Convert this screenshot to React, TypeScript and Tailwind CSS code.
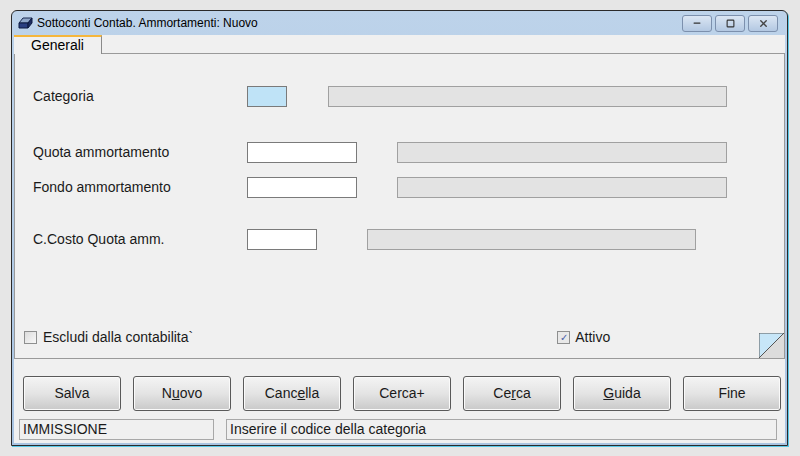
import { Minus, Square, X } from 'lucide-react';

const font = { fontFamily: '"Liberation Sans", Arial, sans-serif' };

const Row = ({ label, input, gap, bg }: { label: string; input: number; gap: number; bg?: string }) => (
  <div className="flex items-center h-[22px]">
    <div className="w-[214px] text-[14px] text-[#1a1a1a]">{label}</div>
    <div className={`h-[21px] border border-[#7a7a7a] ${bg ?? 'bg-white'}`} style={{ width: input }} />
    <div className="h-[21px] border border-[#a0a0a0] bg-[#e3e3e3]" style={{ marginLeft: gap, width: label.startsWith('C.') ? 329 : label === 'Categoria' ? 399 : 330 }} />
  </div>
);

const Btn = ({ children }: { children: React.ReactNode }) => (
  <button className="w-[98px] h-[35px] rounded-[3px] border border-[#5a5a5a] bg-gradient-to-b from-[#f4f4f4] via-[#e4e4e4] to-[#c9c9c9] text-[14px] text-[#1a1a1a] shadow-[inset_0_0_0_1px_#fafafa]">
    {children}
  </button>
);

export default function App() {
  return (
    <div style={font} className="w-[800px] h-[456px] bg-[#e6e6e6] pt-[10px] pl-[11px]">
      <div className="w-[777px] h-[436px] border border-[#2a2a2a] rounded-t-[6px] bg-gradient-to-b from-[#bdd3ea] to-[#a9c4e2] p-[2px] pt-0 flex flex-col shadow-[1px_1px_0_#58c7e6]">
        <div className="h-[24px] flex items-center px-[3px] shrink-0">
          <svg width="16" height="14" viewBox="0 0 16 14" className="mr-[4px]">
            <path d="M2 7 L6 2 L15 2 L11 7 Z" fill="#8fa7c9" stroke="#1a2a50" />
            <path d="M2 7 L11 7 L11 12 L2 12 Z" fill="#2a3f80" stroke="#0d1a40" />
            <path d="M11 7 L15 2 L15 7 L11 12 Z" fill="#1c2c60" stroke="#0d1a40" />
          </svg>
          <span className="text-[12px] text-black">Sottoconti Contab. Ammortamenti: Nuovo</span>
          <div className="ml-auto flex gap-[3px] mr-[4px]">
            <div className="w-[30px] h-[17px] rounded-[3px] border border-[#7c90ad] bg-gradient-to-b from-[#dbe6f3] to-[#b3c8e2] flex items-center justify-center"><Minus size={10} strokeWidth={3} className="text-[#333]" /></div>
            <div className="w-[30px] h-[17px] rounded-[3px] border border-[#7c90ad] bg-gradient-to-b from-[#dbe6f3] to-[#b3c8e2] flex items-center justify-center"><Square size={9} strokeWidth={3} className="text-[#333]" /></div>
            <div className="w-[30px] h-[17px] rounded-[3px] border border-[#7c90ad] bg-gradient-to-b from-[#dbe6f3] to-[#b3c8e2] flex items-center justify-center"><X size={11} strokeWidth={3} className="text-[#444]" /></div>
          </div>
        </div>
        <div className="flex-1 bg-[#f0f0f0] flex flex-col">
          <div className="h-[19px] flex items-end">
            <div className="w-[88px] h-[19px] border-t-2 border-t-[#f5b63c] border-r border-[#8a8a8a] text-[14px] pl-[17px] leading-[16px] text-black bg-[#f0f0f0]">Generali</div>
            <div className="flex-1 border-b border-[#9a9a9a]" />
          </div>
          <div className="h-[305px] border border-t-0 border-[#9a9a9a] relative pl-[18px] flex flex-col">
            <div className="mt-[31px]"><Row label="Categoria" input={40} gap={41} bg="bg-[#bfe3f7]" /></div>
            <div className="mt-[34px]"><Row label="Quota ammortamento" input={110} gap={40} /></div>
            <div className="mt-[13px]"><Row label="Fondo ammortamento" input={110} gap={40} /></div>
            <div className="mt-[30px]"><Row label="C.Costo Quota amm." input={70} gap={50} /></div>
            <div className="mt-auto mb-[10px] flex items-center text-[14px] text-[#1a1a1a] -ml-[9px]">
              <div className="w-[13px] h-[13px] border border-[#8e8f8f] bg-gradient-to-br from-[#dcdcdc] to-[#f8f8f8] mr-[6px]" />
              <span>Escludi dalla contabilita`</span>
              <div className="ml-[364px] w-[13px] h-[13px] border border-[#8e8f8f] bg-[#e8e8e8] mr-[5px] flex items-center justify-center text-[10px] text-[#4a5da8] leading-none">✓</div>
              <span>Attivo</span>
            </div>
            <svg width="25" height="25" viewBox="0 0 25 25" className="absolute right-0 bottom-0">
              <path d="M0 0 L25 0 L0 25 Z" fill="#c7e6f8" />
              <path d="M25 0 L25 25 L0 25 Z" fill="#dcdcdc" />
              <path d="M0 0 L25 0 M0 0 L0 25 L25 0" stroke="#555" fill="none" />
            </svg>
          </div>
          <div className="flex gap-[12px] pl-[9px] mt-[17px]">
            <Btn>Salva</Btn>
            <Btn>N<u>u</u>ovo</Btn>
            <Btn>Canc<u>e</u>lla</Btn>
            <Btn>Cerca+</Btn>
            <Btn>Ce<u>r</u>ca</Btn>
            <Btn><u>G</u>uida</Btn>
            <Btn>Fine</Btn>
          </div>
          <div className="flex gap-[12px] pl-[5px] mt-[8px] text-[14px] text-[#1a1a1a]">
            <div className="w-[195px] h-[21px] border border-[#a8a8a8] px-[3px] leading-[19px]">IMMISSIONE</div>
            <div className="w-[551px] h-[21px] border border-[#a8a8a8] px-[3px] leading-[19px]">Inserire il codice della categoria</div>
          </div>
        </div>
      </div>
    </div>
  );
}
